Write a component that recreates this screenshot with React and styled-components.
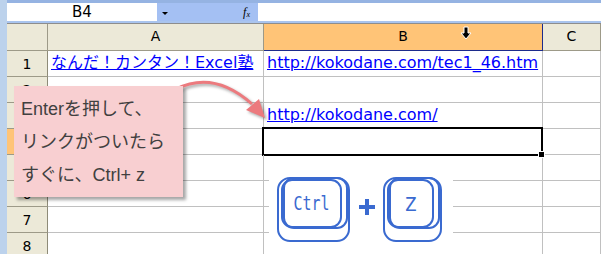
import React from "react";
import styled, { createGlobalStyle } from "styled-components";

const GlobalStyle = createGlobalStyle`
  html, body {
    margin: 0;
    padding: 0;
    background: #fff;
    overflow: hidden;
  }
  body {
    font-family: "DejaVu Sans", "Noto Sans CJK JP", sans-serif;
  }
`;

const Window = styled.div`
  position: relative;
  display: flex;
  width: 601px;
  height: 254px;
  overflow: hidden;
  background: #fff;
`;

const Frame = styled.div`
  width: 7px;
  flex-shrink: 0;
  background: #bcd2ec;
`;

const Main = styled.div`
  flex: 1;
  min-width: 0;
  display: flex;
  flex-direction: column;
`;

const FormulaBar = styled.div`
  display: flex;
  height: 24px;
  border-top: 3px solid #95b3e2;
  border-bottom: 2px solid #a9c4ee;
`;

const NameBox = styled.div`
  width: 150px;
  display: flex;
  align-items: center;
  justify-content: center;
  font-size: 15px;
  color: #000;
`;

const DropZone = styled.div`
  width: 101px;
  display: flex;
  align-items: center;
  justify-content: space-between;
  padding: 0 8px 0 5px;
  box-sizing: border-box;
  background: #a4c0f3;
`;

const DropArrow = styled.span`
  width: 0;
  height: 0;
  border-left: 3px solid transparent;
  border-right: 3px solid transparent;
  border-top: 3px solid #000;
  margin-top: 2px;
`;

const Fx = styled.span`
  font-family: "Liberation Serif", serif;
  font-style: italic;
  font-size: 12px;
  color: #000;
  sub {
    font-size: 8px;
    vertical-align: -1px;
  }
`;

const FormulaInput = styled.div`
  flex: 1;
  background: #fff;
`;

const Sheet = styled.div`
  display: grid;
  grid-template-columns: 41px 216px 279px 1fr;
  grid-template-rows: 27px repeat(8, 26px);
  border-top: 1px solid #8d8d8d;
`;

const Corner = styled.div`
  background: #ece9d8;
  border-right: 1px solid #9d9a88;
  border-bottom: 1px solid #9d9a88;
`;

const ColHead = styled.div`
  display: flex;
  align-items: center;
  justify-content: center;
  padding-bottom: 2px;
  box-sizing: border-box;
  font-size: 14px;
  color: #000;
  background: ${(p) => (p.$active ? "#ffc477" : "#ece9d8")};
  border-right: 1px solid ${(p) => (p.$active ? "#1c2b8c" : "#9d9a88")};
  border-bottom: 1px solid ${(p) => (p.$active ? "#1c2b8c" : "#9d9a88")};
`;

const RowHead = styled.div`
  display: flex;
  align-items: center;
  justify-content: center;
  font-size: 14px;
  color: #000;
  background: ${(p) => (p.$active ? "#ffc477" : "#ece9d8")};
  border-right: 1px solid ${(p) => (p.$active ? "#1c2b8c" : "#8e8b78")};
  border-bottom: 1px solid #9d9a88;
`;

const Cell = styled.div`
  position: relative;
  display: flex;
  align-items: flex-end;
  padding: 0 0 3px 3px;
  box-sizing: border-box;
  overflow: visible;
  white-space: nowrap;
  border-right: 1px solid #c0c0c0;
  border-bottom: 1px solid #c0c0c0;

  ${(p) =>
    p.$selected &&
    `
    &::after {
      content: "";
      position: absolute;
      left: -2px;
      top: -2px;
      right: -1px;
      bottom: -2px;
      border: 2px solid #000;
    }
    &::before {
      content: "";
      position: absolute;
      right: -3px;
      bottom: -4px;
      width: 5px;
      height: 5px;
      background: #000;
      border: 1px solid #fff;
      z-index: 1;
    }
  `}
`;

const CellLink = styled.a`
  font-family: "DejaVu Sans", "Noto Sans CJK JP", sans-serif;
  font-size: 16px;
  line-height: 20px;
  color: #0000ff;
  text-decoration: underline;
`;

const Callout = styled.div`
  position: absolute;
  left: 14px;
  top: 86px;
  width: 169px;
  height: 111px;
  box-sizing: border-box;
  padding: 7px 0 0 7px;
  background: #f8cfd1;
  box-shadow: 3px 3px 3px rgba(0, 0, 0, 0.35);
  font-family: "Liberation Sans", "Noto Sans CJK JP", sans-serif;
  font-size: 18px;
  line-height: 33px;
  color: #404040;
  white-space: nowrap;
`;

const Overlay = styled.svg`
  position: absolute;
  left: 0;
  top: 0;
  pointer-events: none;
`;

const Keys = styled.svg`
  position: absolute;
  left: 269px;
  top: 162px;
  width: 184px;
  height: 92px;
  background: #fff;
`;

const Cursor = styled.svg`
  position: absolute;
  left: 459px;
  top: 26px;
  width: 14px;
  height: 14px;
`;

const KEY = "#3a6ad0";

function KeyCap({ x, y, w, h, label, size, textW }) {
  return (
    <g fill="none" stroke={KEY} strokeWidth="2">
      <rect x={x} y={y} width={w} height={h + 16} rx="12" />
      <rect x={x + 6} y={y} width={w - 8} height={h + 3} rx="10" />
      <rect x={x + 4} y={y + 2} width={w - 12} height={h} rx="10" />
      <text
        x={x + 4 + (w - 12) / 2}
        y={y + 2 + h / 2 + size * 0.36}
        fill={KEY}
        stroke="none"
        fontFamily="'DejaVu Sans Mono', 'Liberation Mono', monospace"
        fontSize={size}
        textAnchor="middle"
        textLength={textW}
        lengthAdjust="spacingAndGlyphs"
      >
        {label}
      </text>
    </g>
  );
}

const rows = [1, 2, 3, 4, 5, 6, 7, 8];

export default function App() {
  return (
    <>
      <GlobalStyle />
      <Window>
        <Frame />
        <Main>
          <FormulaBar>
            <NameBox>B4</NameBox>
            <DropZone>
              <DropArrow />
              <Fx>
                f<sub>x</sub>
              </Fx>
            </DropZone>
            <FormulaInput />
          </FormulaBar>
          <Sheet>
            <Corner />
            <ColHead>A</ColHead>
            <ColHead $active>B</ColHead>
            <ColHead>C</ColHead>
            {rows.map((r) => (
              <React.Fragment key={r}>
                <RowHead $active={r === 4}>{r}</RowHead>
                <Cell>
                  {r === 1 && <CellLink href="#">なんだ！カンタン！Excel塾</CellLink>}
                </Cell>
                <Cell $selected={r === 4}>
                  {r === 1 && (
                    <CellLink href="#">http://kokodane.com/tec1_46.htm</CellLink>
                  )}
                  {r === 3 && <CellLink href="#">http://kokodane.com/</CellLink>}
                </Cell>
                <Cell />
              </React.Fragment>
            ))}
          </Sheet>
        </Main>

        <Overlay width="601" height="254" viewBox="0 0 601 254">
          <g style={{ filter: "drop-shadow(2px 2px 1.5px rgba(0,0,0,0.35))" }}>
            <path
              d="M176 89 Q214 70 252 104"
              fill="none"
              stroke="#ec7a7e"
              strokeWidth="3"
            />
            <polygon points="246,110 259,99 265,118" fill="#ec7a7e" />
          </g>
        </Overlay>

        <Callout>
          <div>Enterを押して、</div>
          <div>リンクがついたら</div>
          <div>すぐに、Ctrl+ z</div>
        </Callout>

        <Keys viewBox="0 0 184 92">
          <KeyCap x={9} y={16} w={71} h={47} label="Ctrl" size={19} textW={36} />
          <rect x={90} y={43} width={16} height={4} fill={KEY} />
          <rect x={96} y={37} width={4} height={16} fill={KEY} />
          <KeyCap x={115} y={16} w={57} h={47} label="Z" size={20} textW={12} />
        </Keys>

        <Cursor viewBox="0 0 14 14">
          <path
            d="M5 1 h4 v6 h3 l-5 6 l-5 -6 h3 z"
            fill="#000"
            stroke="#fff"
            strokeWidth="1"
          />
        </Cursor>
      </Window>
    </>
  );
}
